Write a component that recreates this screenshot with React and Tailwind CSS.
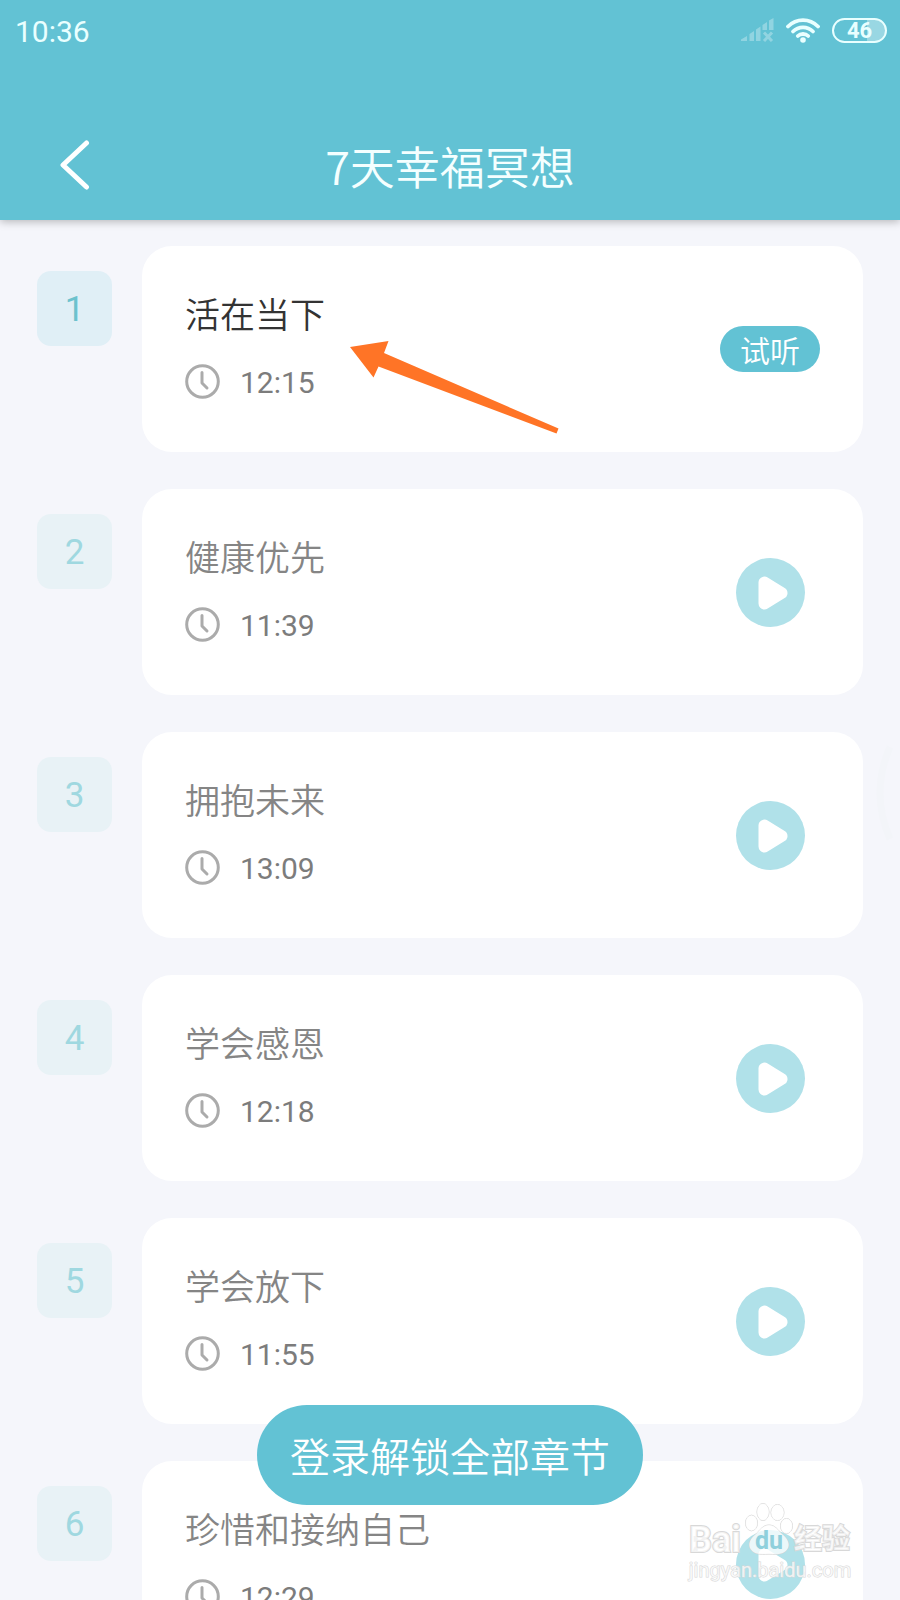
import React, { useState } from 'react';

const chapters = [
  { id: 1, title: '活在当下', time: '12:15', free: true },
  { id: 2, title: '健康优先', time: '11:39' },
  { id: 3, title: '拥抱未来', time: '13:09' },
  { id: 4, title: '学会感恩', time: '12:18' },
  { id: 5, title: '学会放下', time: '11:55' },
  { id: 6, title: '珍惜和接纳自己', time: '12:29' },
];

function StatusBar() {
  return (
    <div className="flex items-center justify-between h-[60px] pl-[15px] pr-[13px]">
      <span className="pt-[3px] text-[30px] leading-[60px] text-[#e9ffff]">10:36</span>
      <div className="flex items-center gap-3">
        <svg className="w-[33px] h-[24px] opacity-30" viewBox="0 0 33 24" fill="#fff">
          <path d="M0 23V21.500L6 18V23ZM8.500 16L13 13V23H8.500ZM15 11.500L19.500 8.500V23H15ZM21.500 7L26 4V12H21.500ZM28 2.500L32.500 0V12H28Z" />
          <path d="M23 14.500L31 23M31 14.500L23 23" stroke="#fff" strokeWidth="3" />
        </svg>
        <svg className="w-[34px] h-[25px]" viewBox="0 0 34 25" fill="none" stroke="#e9ffff" strokeWidth="3.800" strokeLinecap="round">
          <path d="M2 8.500C10.500 0 23.500 0 32 8.500" />
          <path d="M7 13.500C12.500 8 21.500 8 27 13.500" />
          <path d="M11.800 18C14.500 15.300 19.500 15.300 22.200 18" />
          <circle cx="17" cy="22" r="2.800" fill="#e9ffff" stroke="none" />
        </svg>
        <div className="flex items-center justify-center w-[55px] h-[25px] rounded-full border-2 border-[#e9ffff] bg-linear-to-r from-transparent from-65% to-white/35 to-65%">
          <span className="pt-px font-bold text-[22px] leading-5 text-[#e9ffff]">46</span>
        </div>
      </div>
    </div>
  );
}

function TopBar() {
  return (
    <header className="relative z-10 shrink-0 h-[220px] bg-[#62c2d4] shadow-[0_2px_8px_rgba(0,0,0,0.25)]">
      <StatusBar />
      <div className="grid grid-cols-[100px_1fr_100px] items-center h-[120px] mt-[45px]">
        <button aria-label="返回" className="flex items-center justify-center h-[80px] pl-[50px]">
          <svg className="w-[30px] h-[50px]" viewBox="0 0 30 50" fill="none" stroke="#fff" strokeWidth="5" strokeLinecap="round" strokeLinejoin="round">
            <path d="M26.500 3L3 25L26.500 47" />
          </svg>
        </button>
        <h1 className="pt-[2px] text-center font-['Noto_Sans_CJK_SC',sans-serif] text-[45px] leading-[60px] text-[#f4ffff] font-[350]">7天幸福冥想</h1>
      </div>
    </header>
  );
}

function Clock() {
  return (
    <svg className="w-[35px] h-[35px]" viewBox="0 0 35 35" fill="none" stroke="#ababab" strokeWidth="3" strokeLinecap="round" strokeLinejoin="round">
      <circle cx="17.500" cy="17.500" r="15.800" />
      <path d="M17 8.500V19L22 24" />
    </svg>
  );
}

// hint arrow laid over the first card
function Arrow() {
  return (
    <svg className="absolute left-[208px] top-[94px] w-[209px] h-[94px]" viewBox="0 0 209 94" fill="#ff7426">
      <path d="M0 7L38.500 1L34 13L208.500 88.500L206.500 93.500L28.500 26.500L23.500 37.500Z" />
    </svg>
  );
}

function Chapter({ chapter, onPlay }) {
  const free = chapter.free;
  return (
    <li className="flex gap-[30px]">
      <div className={`flex items-center justify-center shrink-0 w-[75px] h-[75px] pt-1 mt-[25px] rounded-[14px] text-[35px] ${free ? 'bg-[#e0eff6] text-[#6cc2cd]' : 'bg-[#e8f2f6] text-[#9fd8e0]'}`}>
        {chapter.id}
      </div>
      <div className="relative flex flex-1 h-[206px] pl-[43px] pr-[43px] rounded-[30px] bg-white">
        <div className="flex-1 pt-[47px]">
          <h2 className={`text-[35px] leading-[48px] font-[350] ${free ? 'text-[#333]' : 'text-[#858585]'}`}>{chapter.title}</h2>
          <div className="flex items-center gap-[20px] h-[36px] mt-[22px]">
            <Clock />
            <span className="pt-1 text-[30px] leading-8 text-[#7c7c7c]">{chapter.time}</span>
          </div>
        </div>
        <div className="flex items-center justify-center w-[100px]">
          {free ? (
            <button onClick={() => onPlay(chapter.id)} className="w-full h-[46px] pt-[6px] rounded-full bg-[#62c2d4] text-[30px] leading-10 font-[350] text-white">
              试听
            </button>
          ) : (
            <button onClick={() => onPlay(chapter.id)} aria-label={`播放 ${chapter.title}`} className="flex items-center justify-center w-[69px] h-[69px] rounded-full bg-[#b0e1e9]">
              <svg className="w-[69px] h-[69px]" viewBox="0 0 69 69" fill="#fff" stroke="#fff" strokeWidth="12" strokeLinejoin="round">
                <path d="M28.500 24.500V45.500L45.500 35Z" />
              </svg>
            </button>
          )}
        </div>
        {free && <Arrow />}
      </div>
    </li>
  );
}

function Watermark() {
  return (
    <div className="absolute right-[46px] bottom-[18px] w-[168px] text-white/70 [paint-order:stroke_fill] [-webkit-text-stroke:2px_#d8d8d8] pointer-events-none">
      <div className="flex items-end justify-between h-[56px] pl-[3px] pr-1">
        <span className="font-bold text-[36px] leading-9">Bai</span>
        <svg className="absolute left-[58px] top-0 w-[56px] h-[56px]" viewBox="0 0 56 56" fill="#fff" fillOpacity="0.75" stroke="#d4d4d4">
          <ellipse cx="7.500" cy="21" rx="6" ry="7.800" />
          <ellipse cx="19" cy="10" rx="6" ry="8.500" />
          <ellipse cx="33.500" cy="10.500" rx="6.500" ry="8" />
          <ellipse cx="42.500" cy="24" rx="6" ry="7.500" />
          <path d="M25 23C31 23 34 28 38 32C43 36 46 41 44 46C41 52 34 53 25 52C16 53 9 52 6 46C4 41 7 36 12 32C16 28 19 23 25 23Z" />
          <text x="25" y="47" textAnchor="middle" fontSize="25" fontWeight="700" fill="#8fd0dc" fillOpacity="1" stroke="none" className="[-webkit-text-stroke:0]">du</text>
        </svg>
        <span className="font-bold text-[28px] leading-9">经验</span>
      </div>
      <div className="text-center text-[20px] leading-6 [-webkit-text-stroke:1px_#d8d8d8]">jingyan.baidu.com</div>
    </div>
  );
}

export default function App() {
  const [current, setCurrent] = useState(null);

  return (
    <div className="relative flex flex-col h-screen overflow-hidden bg-[#f5f6fb] font-[Roboto,'Noto_Sans_CJK_SC',sans-serif]">
      <TopBar />
      <main className="flex-1 min-h-0 overflow-y-auto [scrollbar-width:none]" data-current={current}>
        <ol className="flex flex-col gap-[37px] px-[37px] pt-[26px] pb-[37px]">
          {chapters.map((chapter) => (
            <Chapter key={chapter.id} chapter={chapter} onPlay={setCurrent} />
          ))}
        </ol>
      </main>

      {/* side handle */}
      <svg className="absolute right-0 top-[745px] w-[24px] h-[96px]" viewBox="0 0 24 96" fill="none" stroke="#f3f5f9" strokeWidth="7">
        <path d="M14 2C1 32 1 64 14 94" />
      </svg>

      <div className="absolute inset-x-0 bottom-[95px] flex justify-center pointer-events-none">
        <button className="h-[100px] px-[33px] pt-[7px] rounded-full bg-[#62c2d4] text-[40px] leading-[60px] font-[350] text-white pointer-events-auto">
          登录解锁全部章节
        </button>
      </div>
      <Watermark />
    </div>
  );
}
